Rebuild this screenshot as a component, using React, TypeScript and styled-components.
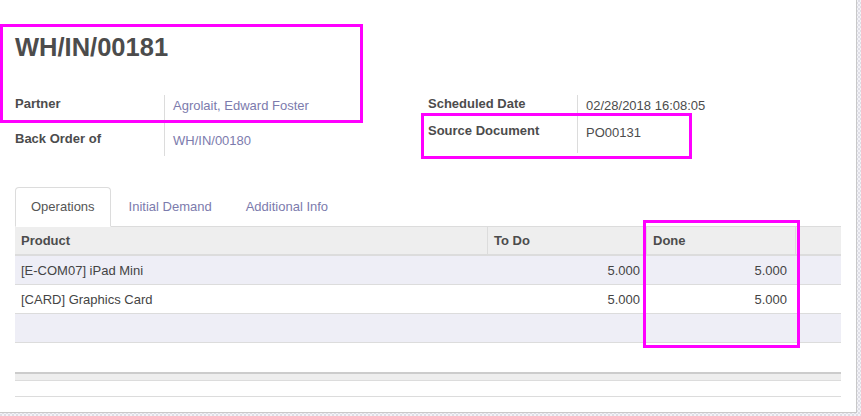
import React from "react";
import styled, { createGlobalStyle } from "styled-components";

const Global = createGlobalStyle`
  html, body { margin: 0; padding: 0; }
  body {
    font-family: "Liberation Sans", Arial, sans-serif;
    font-size: 13px;
    color: #4c4c4c;
    background: #fff;
  }
`;

const Page = styled.div`
  position: relative;
  width: 861px;
  height: 416px;
  overflow: hidden;
  background-color: #f3f3f7;
  background-image: repeating-conic-gradient(#dedee6 0 25%, #f3f3f7 0 50%);
  background-size: 4px 4px;
`;

const Sheet = styled.div`
  box-sizing: border-box;
  width: 857px;
  height: 413px;
  background: #fff;
  border-right: 1px solid #c9c9c9;
  border-bottom: 1px solid #c9c9c9;
  padding: 0 15px;
  display: flex;
  flex-direction: column;
`;

const Title = styled.h1`
  margin: 0;
  padding-top: 32px;
  font-size: 25.5px;
  line-height: 31px;
  font-weight: bold;
  color: #4c4c4c;
`;

const Groups = styled.div`
  display: grid;
  grid-template-columns: 413px 413px;
  align-items: start;
  margin-top: 32px;
`;

const Group = styled.div`
  display: flex;
  flex-direction: column;
`;

const FieldRow = styled.div<{ $h: number }>`
  display: grid;
  grid-template-columns: 150px 1fr;
  height: ${(p) => p.$h}px;
`;

const Label = styled.div`
  font-weight: bold;
  padding-top: 1px;
  line-height: 16px;
  border-right: 1px solid #dcdcdc;
  color: #4c4c4c;
`;

const Value = styled.div<{ $link?: boolean }>`
  padding: 3px 0 0 8px;
  line-height: 16px;
  color: ${(p) => (p.$link ? "#7c7bad" : "#4c4c4c")};
`;

const Tabs = styled.div`
  display: flex;
  margin-top: 31px;
  height: 39px;
  border-bottom: 1px solid #dcdcdc;
`;

const Tab = styled.div<{ $active?: boolean }>`
  box-sizing: border-box;
  height: 40px;
  margin-right: 2px;
  padding: 10px 15px 0;
  line-height: 18px;
  border: 1px solid ${(p) => (p.$active ? "#dcdcdc" : "transparent")};
  border-bottom-color: ${(p) => (p.$active ? "#fff" : "transparent")};
  border-radius: 4px 4px 0 0;
  background: ${(p) => (p.$active ? "#fff" : "transparent")};
  color: ${(p) => (p.$active ? "#555" : "#7c7bad")};
  position: relative;
  z-index: 1;
`;

const Grid = styled.div`
  display: grid;
  grid-template-columns: 472px 159px 149px 46px;
`;

const HeadCell = styled.div<{ $divider?: boolean }>`
  box-sizing: border-box;
  height: 29px;
  background: #eeeeee;
  border-bottom: 2px solid #dcdcdc;
  border-left: ${(p) => (p.$divider ? "1px solid #dcdcdc" : "none")};
  padding: 0 6px;
  line-height: 28px;
  font-weight: bold;
  color: #4c4c4c;
`;

const Cell = styled.div<{ $striped?: boolean; $num?: boolean; $pr?: number }>`
  box-sizing: border-box;
  height: 29px;
  line-height: 29px;
  border-bottom: 1px solid #dcdcdc;
  background: ${(p) => (p.$striped ? "#eeeef6" : "#fff")};
  padding: 0 ${(p) => p.$pr ?? 6}px 0 6px;
  text-align: ${(p) => (p.$num ? "right" : "left")};
  color: #444;
  white-space: nowrap;
`;

const TableFoot = styled.div`
  margin-top: 29px;
  height: 6px;
  background: #eeeeee;
  border-top: 2px solid #cccccc;
  border-bottom: 1px solid #dcdcdc;
`;

const BottomLine = styled.div`
  height: 15px;
  border-bottom: 1px solid #dcdcdc;
`;

const Highlight = styled.div<{ $x: number; $y: number; $w: number; $h: number }>`
  position: absolute;
  box-sizing: border-box;
  left: ${(p) => p.$x}px;
  top: ${(p) => p.$y}px;
  width: ${(p) => p.$w}px;
  height: ${(p) => p.$h}px;
  border: 3px solid #ff00ff;
  pointer-events: none;
`;

const rows = [
  { product: "[E-COM07] iPad Mini", todo: "5.000", done: "5.000" },
  { product: "[CARD] Graphics Card", todo: "5.000", done: "5.000" },
  { product: "", todo: "", done: "" },
];

export default function App() {
  return (
    <Page>
      <Global />
      <Sheet>
        <Title>WH/IN/00181</Title>
        <Groups>
          <Group>
            <FieldRow $h={35}>
              <Label>Partner</Label>
              <Value $link>Agrolait, Edward Foster</Value>
            </FieldRow>
            <FieldRow $h={26}>
              <Label>Back Order of</Label>
              <Value $link>WH/IN/00180</Value>
            </FieldRow>
          </Group>
          <Group>
            <FieldRow $h={27}>
              <Label>Scheduled Date</Label>
              <Value>02/28/2018 16:08:05</Value>
            </FieldRow>
            <FieldRow $h={31}>
              <Label>Source Document</Label>
              <Value>PO00131</Value>
            </FieldRow>
          </Group>
        </Groups>
        <Tabs>
          <Tab $active>Operations</Tab>
          <Tab>Initial Demand</Tab>
          <Tab>Additional Info</Tab>
        </Tabs>
        <Grid>
          <HeadCell>Product</HeadCell>
          <HeadCell $divider>To Do</HeadCell>
          <HeadCell $divider>Done</HeadCell>
          <HeadCell $divider />
          {rows.map((r, i) => (
            <React.Fragment key={i}>
              <Cell $striped={i % 2 === 0}>{r.product}</Cell>
              <Cell $striped={i % 2 === 0} $num>{r.todo}</Cell>
              <Cell $striped={i % 2 === 0} $num $pr={8}>{r.done}</Cell>
              <Cell $striped={i % 2 === 0} />
            </React.Fragment>
          ))}
        </Grid>
        <TableFoot />
        <BottomLine />
      </Sheet>
      <Highlight $x={0} $y={24} $w={363} $h={99} />
      <Highlight $x={421} $y={113} $w={271} $h={46} />
      <Highlight $x={643} $y={220} $w={157} $h={128} />
    </Page>
  );
}
